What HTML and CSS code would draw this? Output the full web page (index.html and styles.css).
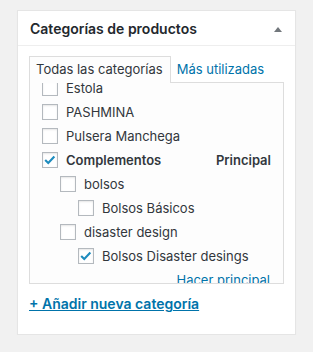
FILE: index.html
```html
<!DOCTYPE html>
<html lang="es">
<head>
    <meta charset="UTF-8">
    <title>Categorías de productos</title>
    <link rel="stylesheet" href="styles.css">
</head>
<body>
    <div class="postbox">
        <div class="postbox-header">
            <h2 class="hndle">Categorías de productos</h2>
            <span class="toggle-indicator"></span>
        </div>
        <div class="inside">
            <ul class="category-tabs">
                <li class="tab active">Todas las categorías</li>
                <li class="tab"><a href="#">Más utilizadas</a></li>
            </ul>
            <div class="tabs-panel">
                <ul class="checklist scrolled">
                    <li><label><span class="cb"></span>Estola</label></li>
                    <li><label><span class="cb"></span>PASHMINA</label></li>
                    <li><label><span class="cb"></span>Pulsera Manchega</label></li>
                    <li class="primary">
                        <div class="row">
                            <label><span class="cb checked"><svg viewBox="0 0 16 16"><polyline points="2.5,8 6,11.5 13,4"/></svg></span>Complementos</label>
                            <span class="primary-label">Principal</span>
                        </div>
                        <ul class="children">
                            <li>
                                <label><span class="cb"></span>bolsos</label>
                                <ul class="children">
                                    <li><label><span class="cb"></span>Bolsos Básicos</label></li>
                                </ul>
                            </li>
                            <li>
                                <label><span class="cb"></span>disaster design</label>
                                <ul class="children">
                                    <li>
                                        <label><span class="cb checked"><svg viewBox="0 0 16 16"><polyline points="2.5,8 6,11.5 13,4"/></svg></span>Bolsos Disaster desings</label>
                                        <a href="#" class="make-primary">Hacer principal</a>
                                    </li>
                                </ul>
                            </li>
                        </ul>
                    </li>
                </ul>
            </div>
            <p class="adder"><a href="#">+ Añadir nueva categoría</a></p>
        </div>
    </div>
</body>
</html>
```

FILE: styles.css
```css
body {
    margin: 0;
    background: #f1f1f1;
    font-family: Inter, "Noto Sans", sans-serif;
    font-size: 13px;
    color: #32373c;
}

a {
    color: #0073aa;
    text-decoration: none;
}

.postbox {
    width: 277px;
    margin: 10px 0 0 17px;
    background: #fff;
    border: 1px solid #e5e5e5;
    box-shadow: 0 1px 1px rgba(0, 0, 0, 0.04);
}

.postbox-header {
    display: flex;
    align-items: center;
    justify-content: space-between;
    height: 34px;
    padding: 0 13px 0 12px;
    border-bottom: 1px solid #eee;
}

.hndle {
    margin: 0;
    font-size: 14px;
    font-weight: 600;
    color: #23282d;
}

.toggle-indicator {
    width: 0;
    height: 0;
    border-left: 4px solid transparent;
    border-right: 4px solid transparent;
    border-bottom: 5px solid #72777c;
    margin-top: 2px;
}

.inside {
    padding: 10px 11px 20px 11px;
}

/* tabs */
.category-tabs {
    display: flex;
    align-items: flex-start;
    height: 26px;
    margin: 0;
    padding: 0;
    list-style: none;
}

.tab {
    padding: 1px 7px 0 6px;
    line-height: 24px;
}

.tab.active {
    height: 27px;
    box-sizing: border-box;
    padding-top: 0;
    background: #fdfdfd;
    border: 1px solid #ddd;
    border-bottom: 0;
    position: relative;
}

/* checklist panel */
.tabs-panel {
    height: 202px;
    box-sizing: border-box;
    overflow: hidden;
    padding: 0 12px;
    border: 1px solid #ddd;
    background: #fdfdfd;
}

.checklist,
.children {
    list-style: none;
    margin: 0;
    padding: 0;
}

.scrolled {
    margin-top: -7px;
}

.children {
    margin-left: 18px;
}

.checklist li {
    line-height: 24px;
}

.checklist label {
    display: flex;
    align-items: center;
    height: 24px;
}

.row {
    display: flex;
    justify-content: space-between;
}

.primary .row label {
    font-weight: 600;
}

.cb {
    width: 16px;
    height: 16px;
    margin-right: 8px;
    box-sizing: border-box;
    border: 1px solid #b4b9be;
    background: #fff;
    box-shadow: inset 0 1px 2px rgba(0, 0, 0, 0.1);
}

.cb svg {
    display: block;
    width: 14px;
    height: 14px;
    fill: none;
    stroke: #1e8cbe;
    stroke-width: 2.4;
}

.primary-label {
    font-weight: 600;
}

.make-primary {
    display: block;
    text-align: right;
    margin-right: 1px;
}

.adder {
    margin: 10px 0 0;
    line-height: 20px;
}

.adder a {
    font-size: 14px;
    font-weight: 600;
    text-decoration: underline;
}
```
